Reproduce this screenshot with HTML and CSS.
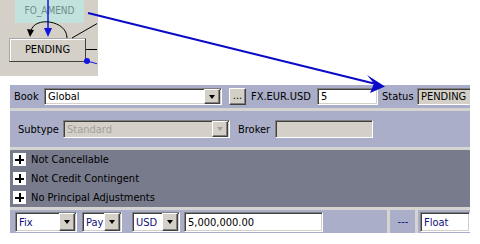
FILE: index.html
```html
<!DOCTYPE html>
<html lang="en">
<head>
  <meta charset="UTF-8" />
  <title>Trade - Workflow</title>
  <link rel="stylesheet" href="styles.css">
</head>
<body>

  <div class="page">

    <div class="diagram">
      <div class="node node-amend">FO_AMEND</div>
      <div class="node node-pending">PENDING</div>
      <svg class="edges" width="97" height="76" viewBox="0 0 97 76">
        <line x1="48" y1="0" x2="48" y2="30" stroke="#1414e0" stroke-width="1.5"/>
        <polygon points="44,28 52,28 48,37" fill="#1414e0"/>
        <path d="M67 38 C67 20, 34 16, 31 31" fill="none" stroke="#000" stroke-width="1"/>
        <polygon points="27,29 34,30 30,37" fill="#000"/>
        <line x1="72" y1="38" x2="98" y2="23" stroke="#000" stroke-width="1"/>
        <line x1="86" y1="49.5" x2="98" y2="49.5" stroke="#000" stroke-width="1"/>
        <line x1="87" y1="61" x2="98" y2="64" stroke="#1414e0" stroke-width="1"/>
        <circle cx="87" cy="61" r="3" fill="#1414e0"/>
      </svg>
    </div>

    <div class="panel">
      <div class="row row-top">
        <span class="lbl lbl-book">Book</span>
        <div class="field combo combo-book"><span class="val">Global</span><span class="drop"></span></div>
        <div class="dots">...</div>
        <span class="lbl lbl-ccy">FX.EUR.USD</span>
        <div class="field field-qty"><span class="val">5</span></div>
        <span class="lbl lbl-status">Status</span>
        <div class="field field-status"><span class="val">PENDING</span></div>
      </div>
      <div class="hsep"></div>

      <div class="row row-sub">
        <span class="lbl lbl-subtype">Subtype</span>
        <div class="field combo combo-subtype off"><span class="val">Standard</span><span class="drop"></span></div>
        <span class="lbl lbl-broker">Broker</span>
        <div class="field field-broker off"></div>
      </div>
      <div class="hsep"></div>

      <div class="flags">
        <div class="flag"><span class="plus"></span>Not Cancellable</div>
        <div class="flag"><span class="plus"></span>Not Credit Contingent</div>
        <div class="flag"><span class="plus"></span>No Principal Adjustments</div>
      </div>
      <div class="hsep"></div>

      <div class="row row-leg">
        <div class="leg-main">
          <div class="field combo combo-fix navy"><span class="val">Fix</span><span class="drop"></span></div>
          <div class="field combo combo-pay navy"><span class="val">Pay</span><span class="drop"></span></div>
          <div class="field combo combo-ccy navy"><span class="val">USD</span><span class="drop"></span></div>
          <div class="field field-amount"><span class="val">5,000,000.00</span></div>
        </div>
        <div class="vsep"></div>
        <div class="leg-mid">---</div>
        <div class="vsep"></div>
        <div class="leg-end">
          <div class="field field-float navy"><span class="val">Float</span></div>
        </div>
      </div>
    </div>

    <!-- link from the workflow node to the status field -->
    <svg class="link" width="480" height="244" viewBox="0 0 480 244">
      <line x1="88" y1="13" x2="374" y2="83.5" stroke="#0a0ac8" stroke-width="2"/>
      <polygon points="385,86.5 367,75 374,83.5 370,93" fill="#0a0ac8"/>
    </svg>

  </div>

</body>
</html>
```

FILE: styles.css
```css
* { box-sizing: border-box; margin: 0; padding: 0; }

body {
  font-family: 'DejaVu Sans Condensed', 'Liberation Sans', sans-serif;
  font-size: 11px;
  background: #fff;
  color: #000;
}

.page {
  position: relative;
  width: 480px;
  height: 244px;
  overflow: hidden;
}

/* workflow diagram */

.diagram {
  position: relative;
  width: 98px;
  height: 76px;
  background: #d4d0c8;
}

.node {
  position: absolute;
  text-align: center;
}

.node-amend {
  left: 15px;
  top: 0;
  width: 69px;
  height: 23px;
  line-height: 22px;
  background: #c2e2de;
  color: #6f8c8a;
  font-size: 10px;
}

.node-pending {
  left: 9px;
  top: 38px;
  width: 77px;
  height: 24px;
  line-height: 22px;
  background: #d4d0c8;
  border: 1px solid;
  border-color: #a8a8a8 #404040 #404040 #a8a8a8;
  box-shadow: inset 1px 1px 0 #fff;
}

.edges {
  position: absolute;
  left: 0;
  top: 0;
}

.link {
  position: absolute;
  left: 0;
  top: 0;
  pointer-events: none;
}

/* trade panel */

.panel {
  width: 460px;
  margin: 9px 0 0 10px;
  background: #aaaec8;
  overflow: hidden;
}

.row {
  display: flex;
  align-items: center;
}

.row-top { height: 23px; }
.row-sub { height: 36px; }

.hsep {
  height: 3px;
  background: #d6d4d0;
}

.lbl {
  flex: none;
  white-space: nowrap;
}

.lbl-book { width: 34px; padding-left: 4px; }
.lbl-ccy { width: 71px; margin-left: 0; padding-left: 5px; }
.lbl-status { width: 39px; padding-left: 4px; }
.lbl-subtype { width: 53px; padding-left: 8px; }
.lbl-broker { width: 45px; padding-left: 8px; }

.field {
  flex: none;
  position: relative;
  display: flex;
  align-items: center;
  height: 17px;
  background: #fff;
  border: 1px solid;
  border-color: #808080 #fff #fff #808080;
  box-shadow: inset 1px 1px 0 #404040, inset -1px -1px 0 #d4d0c8;
  white-space: nowrap;
  overflow: hidden;
}

.field .val {
  padding-left: 3px;
  flex: 1;
}

.field.off {
  background: #d4d0c8;
  color: #a39f98;
}

.navy { color: #10107a; }

.drop {
  flex: none;
  position: relative;
  width: 16px;
  height: 100%;
  margin: 1px 1px 1px 0;
  background: #d4d0c8;
  border: 1px solid;
  border-color: #fff #404040 #404040 #fff;
  box-shadow: inset -1px -1px 0 #808080;
}

.drop::after {
  content: "";
  position: absolute;
  left: 4px;
  top: 50%;
  margin-top: -2px;
  border-left: 3.5px solid transparent;
  border-right: 3.5px solid transparent;
  border-top: 4px solid #000;
}

.off .drop::after { border-top-color: #a39f98; }

.combo-book { width: 178px; }
.field-qty { width: 61px; }
.field-status { width: 60px; background: #d4d0c8; }

.dots {
  flex: none;
  width: 17px;
  height: 17px;
  margin-left: 7px;
  line-height: 13px;
  text-align: center;
  background: #d4d0c8;
  border: 1px solid;
  border-color: #fff #404040 #404040 #fff;
  box-shadow: inset -1px -1px 0 #808080;
}

.row-sub .field { height: 18px; }
.combo-subtype { width: 167px; }
.field-broker { width: 98px; }

/* flag rows */

.flags {
  background: #787b8c;
  padding-top: 0;
}

.flag {
  display: flex;
  align-items: center;
  height: 19px;
  padding-left: 3px;
}

.plus {
  position: relative;
  width: 13px;
  height: 13px;
  margin-right: 5px;
  background: #fff;
}

.plus::before,
.plus::after {
  content: "";
  position: absolute;
  background: #000;
}

.plus::before { left: 2px; top: 6px; width: 9px; height: 1.5px; }
.plus::after { left: 6px; top: 2px; width: 1.5px; height: 9px; }

/* leg row */

.row-leg {
  height: 23px;
  align-items: stretch;
}

.leg-main {
  display: flex;
  width: 388px;
  padding: 2px 0 0 5px;
}

.leg-main .field,
.leg-end .field { height: 20px; }

.combo-fix { width: 62px; }
.combo-pay { width: 40px; margin-left: 5px; }
.combo-ccy { width: 48px; margin-left: 10px; }
.field-amount { width: 139px; margin-left: 4px; }

.vsep {
  width: 3px;
  background: #d6d4d0;
}

.leg-mid {
  width: 26px;
  padding: 5px 0 0 8px;
  color: #10107a;
}

.leg-end {
  flex: 1;
  padding: 2px 0 0 2px;
}

.field-float { width: 50px; }
```
